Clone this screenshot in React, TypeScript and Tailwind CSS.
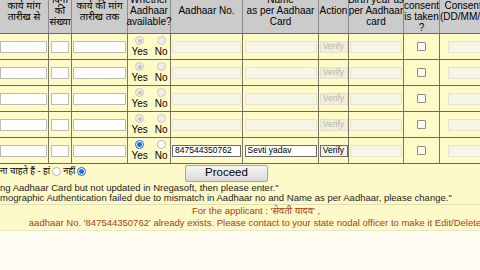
import React from "react";

const COLS = "grid grid-cols-[49px_23px_56px_43px_72px_76px_30px_55px_36px_70px]";
const FONT = { fontFamily: '"Liberation Sans", Arial, "Noto Sans", sans-serif' };

function Radio({ on, disabled }: { on?: boolean; disabled?: boolean }) {
  if (disabled) {
    return (
      <span className="flex size-[9px] items-center justify-center rounded-full border border-[#c9c9c0] bg-[#efefe6]">
        {on && <span className="size-[4px] rounded-full bg-[#c4c4bc]" />}
      </span>
    );
  }
  return on ? (
    <span className="flex size-[9px] items-center justify-center rounded-full border border-[#1b64c8] bg-white">
      <span className="size-[5px] rounded-full bg-[#1f6fd8]" />
    </span>
  ) : (
    <span className="size-[9px] rounded-full border border-[#b5b5b5] bg-white" />
  );
}

function Cell({ children, last }: { children?: React.ReactNode; last?: boolean }) {
  return (
    <div
      className={`flex items-center justify-center ${last ? "" : "border-r border-[#7b7760]"}`}
    >
      {children}
    </div>
  );
}

function TextBox({ w, value, off }: { w: number; value?: string; off?: boolean }) {
  return (
    <div
      className={`flex h-[12px] items-center px-[2px] text-[8.5px] text-black ${
        off
          ? "border border-[#e6e4cc] bg-[#f7f6e6]"
          : value !== undefined
            ? "border border-[#6c6c6c] bg-white"
            : "border border-[#bdbcae] bg-white"
      }`}
      style={{ width: w }}
    >
      {value}
    </div>
  );
}

function Row({ active }: { active?: boolean }) {
  return (
    <div className={`${COLS} h-[26px] border-b border-[#6f6b50] bg-[#fffbc9]`}>
      <Cell>
        <div className="flex w-full justify-start">
          <TextBox w={47} />
        </div>
      </Cell>
      <Cell>
        <TextBox w={18} />
      </Cell>
      <Cell>
        <TextBox w={53} />
      </Cell>
      <Cell>
        <div className="flex gap-[7px] pl-[1px] text-[10px] leading-[10px]">
          <div className="flex flex-col items-center gap-[2px]">
            <Radio on disabled={!active} />
            <span>Yes</span>
          </div>
          <div className="flex flex-col items-center gap-[2px]">
            <Radio disabled={!active} />
            <span>No</span>
          </div>
        </div>
      </Cell>
      <Cell>
        {active ? <TextBox w={69} value="847544350762" /> : <TextBox w={69} off />}
      </Cell>
      <Cell>
        {active ? <TextBox w={72} value="Sevti yadav" /> : <TextBox w={72} off />}
      </Cell>
      <Cell>
        <div
          className={`flex h-[12px] w-[28px] items-center justify-center text-[8.5px] ${
            active
              ? "border border-[#6c6c6c] bg-[#f2f2f2] text-black"
              : "border border-[#e2e0c8] bg-[#efeedd] text-[#b8b7a8]"
          }`}
        >
          Verify
        </div>
      </Cell>
      <Cell>
        <TextBox w={52} off />
      </Cell>
      <Cell>
        <span className="size-[9px] rounded-[1px] border border-[#8c8c86] bg-[#fbfbf6]" />
      </Cell>
      <Cell last>
        <div className="flex w-full justify-start pl-[8px]">
          <TextBox w={60} off />
        </div>
      </Cell>
    </div>
  );
}

function HeadCell({ lines, last }: { lines: string[]; last?: boolean }) {
  return (
    <div
      className={`flex flex-col items-center justify-center whitespace-nowrap text-center text-[10px] leading-[11px] text-black ${
        last ? "" : "border-r border-[#8f8a8f]"
      }`}
    >
      {lines.map((l) => (
        <span key={l}>{l}</span>
      ))}
    </div>
  );
}

export default function App() {
  return (
    <div className="h-[270px] w-[480px] overflow-hidden bg-[#fffcf2]" style={FONT}>
      <div className="-mt-[12px] w-[510px]">
        <div className={`${COLS} h-[46px] border-b border-[#6f6b50] bg-[#cbcbcb]`}>
          <HeadCell lines={["कार्य मांग", "तारीख से"]} />
          <HeadCell lines={["दिनों", "की", "संख्या"]} />
          <HeadCell lines={["कार्य की मांग", "तारीख तक"]} />
          <HeadCell lines={["Whether", "Aadhaar", "available?"]} />
          <HeadCell lines={["Aadhaar No."]} />
          <HeadCell lines={["Name", "as per Aadhaar", "Card"]} />
          <HeadCell lines={["Action"]} />
          <HeadCell lines={["Birth year as", "per Aadhaar", "card"]} />
          <HeadCell lines={["If", "consent", "is taken", "?"]} />
          <HeadCell lines={["Consent Date", "(DD/MM/YYYY)"]} last />
        </div>
        <Row />
        <Row />
        <Row />
        <Row />
        <Row active />

        <div className="bg-[#fdf9c8]">
          <div className="flex h-[18px] items-center">
            <div className="flex w-[185px] items-center gap-[2px] self-start pt-[2px] text-[9px] leading-[10px]">
              <span>ना चाहते हैं - हां</span>
              <Radio />
              <span>नहीं</span>
              <Radio on />
            </div>
            <div className="flex h-[17px] w-[83px] items-center justify-center rounded-[2px] border border-[#a5a5a5] bg-gradient-to-b from-[#f6f6f6] to-[#d9d9d9] text-[11.5px] text-black">
              Proceed
            </div>
          </div>
          <div className="whitespace-nowrap pt-[1px] text-[9.5px] leading-[10px] text-[#1e1e1e]">
            <div>ng Aadhaar Card but not updated in Nregasoft, then please enter."</div>
            <div>mographic Authentication failed due to mismatch in Aadhaar no and Name as per Aadhaar, please change."</div>
          </div>
          <div className="mt-[1px] border-t border-[#e3dfb0] pb-[1px] text-center text-[9.5px] leading-[12px] whitespace-nowrap text-[#a8401f]">
            <div className="pl-[2px]">For the applicant : 'सेवती यादव' ,</div>
            <div>aadhaar No. '847544350762' already exists. Please contact to your state nodal officer to make it Edit/Delete</div>
          </div>
        </div>
        <div className="border-t border-[#ece7c8]" />
      </div>
    </div>
  );
}
